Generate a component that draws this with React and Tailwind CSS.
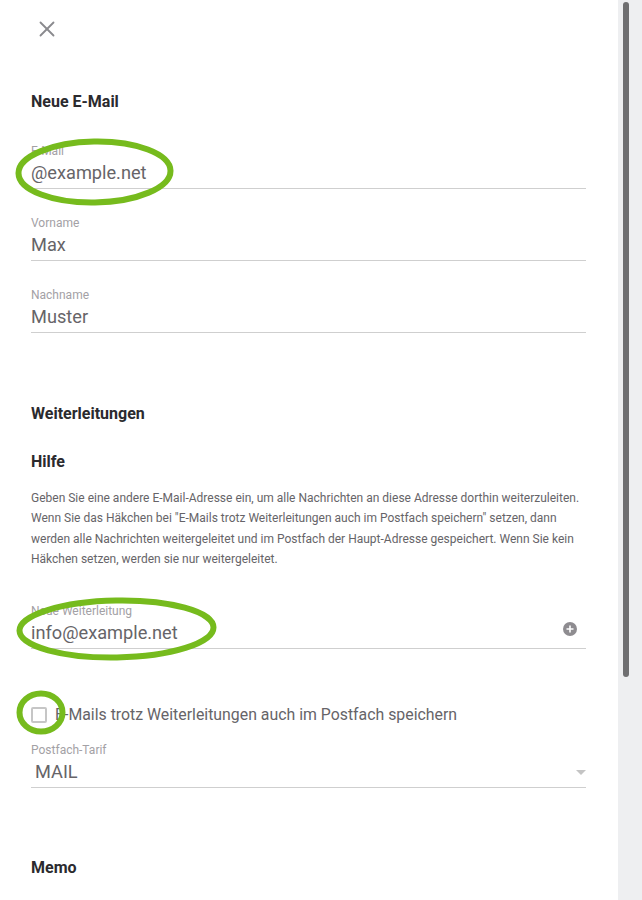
import React from "react";
import { X } from "lucide-react";

const Field = ({ label, value, className = "", children }) => (
  <div className={`border-b border-[#cfcfcf] h-[46px] pt-[1px] relative ${className}`}>
    <div className="text-xs leading-[14px] text-[#a3a1a5]">{label}</div>
    <div className="text-[18.2px] leading-[26px] mt-[2px] text-[#666468]">{value}</div>
    {children}
  </div>
);

const Oval = ({ className, width, height, tilt = 0 }) => (
  <svg
    className={`absolute pointer-events-none ${className}`}
    width={width}
    height={height}
    viewBox={`0 0 ${width} ${height}`}
    fill="none"
  >
    <ellipse
      cx={width / 2}
      cy={height / 2}
      rx={width / 2 - 3.5}
      ry={height / 2 - 3.5}
      stroke="#76bb1d"
      strokeWidth="6"
      transform={`rotate(${tilt} ${width / 2} ${height / 2})`}
    />
  </svg>
);

export default function App() {
  return (
    <div
      className="flex h-[900px] w-[642px] overflow-hidden bg-white relative"
      style={{ fontFamily: "Roboto, sans-serif" }}
    >
      <main className="w-[618px] pl-[31px] pr-[32px]">
        <button className="block ml-[3px] mt-[16px] text-[#8a8a8e]">
          <X className="h-[26px] w-[26px]" strokeWidth={1.7} />
        </button>

        <h2 className="mt-[50px] text-base leading-[20px] font-bold text-[#2b2a2e]">Neue E-Mail</h2>

        <Field label="E-Mail" value="@example.net" className="mt-[31px]" />
        <Field label="Vorname" value="Max" className="mt-[26px]" />
        <Field label="Nachname" value="Muster" className="mt-[26px]" />

        <h2 className="mt-[71px] text-base leading-[20px] font-bold text-[#2b2a2e]">Weiterleitungen</h2>
        <h3 className="mt-[28px] text-base leading-[20px] font-bold text-[#2b2a2e]">Hilfe</h3>

        <p className="mt-[16px] text-xs leading-[20.4px] text-[#666468]">
          Geben Sie eine andere E-Mail-Adresse ein, um alle Nachrichten an diese Adresse dorthin weiterzuleiten.
          Wenn Sie das Häkchen bei "E-Mails trotz Weiterleitungen auch im Postfach speichern" setzen, dann
          werden alle Nachrichten weitergeleitet und im Postfach der Haupt-Adresse gespeichert. Wenn Sie kein
          Häkchen setzen, werden sie nur weitergeleitet.
        </p>

        <Field label="Neue Weiterleitung" value="info@example.net" className="mt-[33px]">
          <svg className="absolute right-[9px] top-[19px]" width="14" height="14" viewBox="0 0 14 14">
            <circle cx="7" cy="7" r="7" fill="#8e8c90" />
            <path d="M7 3.5v7M3.5 7h7" stroke="#fff" strokeWidth="1.6" />
          </svg>
        </Field>

        <label className="flex items-center mt-[57px] h-[18px]">
          <span className="h-4 w-4 rounded-[2px] border-2 border-[#c6c6c6] bg-white" />
          <span className="ml-2 text-[15.85px] leading-[18px] text-[#666468]">
            E-Mails trotz Weiterleitungen auch im Postfach speichern
          </span>
        </label>

        <div className="mt-[18px]">
          <Field label="Postfach-Tarif" value={<span className="pl-1">MAIL</span>}>
            <span className="absolute right-0 top-[28px] h-0 w-0 border-x-[5px] border-t-[5px] border-x-transparent border-t-[#c4c4c4]" />
          </Field>
        </div>

        <h2 className="mt-[70px] text-base leading-[20px] font-bold text-[#2b2a2e]">Memo</h2>
      </main>

      <aside className="w-[24px] bg-[#eeeff1] pl-[5px] pt-[2px]">
        <div className="w-[6px] h-[675px] rounded-full bg-[#6f6f71]" />
      </aside>

      <Oval className="left-[15px] top-[138px]" width={159} height={68} tilt={-1} />
      <Oval className="left-[16px] top-[597px]" width={201} height={64} tilt={-1} />
      <Oval className="left-[16px] top-[690px]" width={50} height={45} />
    </div>
  );
}
